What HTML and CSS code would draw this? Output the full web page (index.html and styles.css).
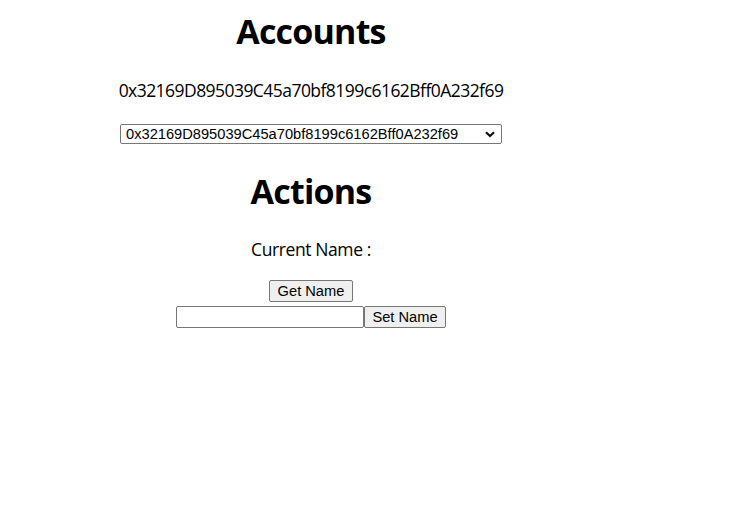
FILE: index.html
```html
<!DOCTYPE html>
<html lang="en">
<head>
<meta charset="utf-8">
<title>Accounts</title>
<link rel="stylesheet" href="styles.css">
</head>
<body>
<div class="app">
  <h1 class="heading heading-accounts">Accounts</h1>
  <p class="address">0x32169D895039C45a70bf8199c6162Bff0A232f69</p>
  <div class="select-wrap">
    <select class="account-select">
      <option>0x32169D895039C45a70bf8199c6162Bff0A232f69</option>
    </select>
    <svg class="chevron" width="10" height="7" viewBox="0 0 10 7"><path d="M1 1.2 L5 5 L9 1.2" fill="none" stroke="#111" stroke-width="2.2"/></svg>
  </div>
  <h1 class="heading heading-actions">Actions</h1>
  <p class="current">Current Name :</p>
  <button class="btn btn-get">Get Name</button>
  <div class="set-row">
    <input class="name-input" type="text"><button class="btn btn-set">Set Name</button>
  </div>
</div>
</body>
</html>
```
FILE: styles.css
```css
html, body {
  margin: 0;
  padding: 0;
  background: #fff;
}
body {
  font-family: "Open Sans", "Noto Sans", sans-serif;
  color: #000;
}
.app {
  width: 622px;
  padding-top: 9px;
  display: flex;
  flex-direction: column;
  align-items: center;
}
.heading {
  margin: 0;
  font-size: 34px;
  line-height: 44px;
  font-weight: 700;
  letter-spacing: -0.8px;
}
.address {
  margin: 25px 0 0;
  font-size: 17.5px;
  line-height: 24px;
  letter-spacing: -0.55px;
}
.select-wrap {
  position: relative;
  margin-top: 22px;
  width: 382px;
  height: 20px;
}
.account-select {
  appearance: none;
  -webkit-appearance: none;
  display: block;
  width: 382px;
  height: 20px;
  margin: 0;
  padding: 0 0 0 5px;
  border: 1px solid #767676;
  border-radius: 2px;
  background: #fff;
  font-family: "Liberation Sans", Arial, sans-serif;
  font-size: 14.67px;
  color: #000;
  box-sizing: border-box;
}
.chevron {
  position: absolute;
  right: 7px;
  top: 7px;
  pointer-events: none;
}
.heading-actions {
  margin-top: 25px;
}
.current {
  margin: 24px 0 0;
  font-size: 17.5px;
  line-height: 24px;
  letter-spacing: -0.4px;
}
.btn {
  height: 22px;
  margin: 0;
  padding: 0;
  border: 1px solid #767676;
  border-radius: 2px;
  background: #efefef;
  font-family: "Liberation Sans", Arial, sans-serif;
  font-size: 14.67px;
  color: #000;
  white-space: nowrap;
  box-sizing: border-box;
}
.btn-get {
  margin-top: 19px;
  width: 84px;
}
.set-row {
  display: flex;
  margin-top: 4px;
}
.name-input {
  width: 188px;
  height: 22px;
  margin: 0;
  padding: 0 3px;
  border: 1px solid #767676;
  border-radius: 2px;
  box-sizing: border-box;
  background: #fff;
}
.btn-set {
  width: 82px;
}
```
